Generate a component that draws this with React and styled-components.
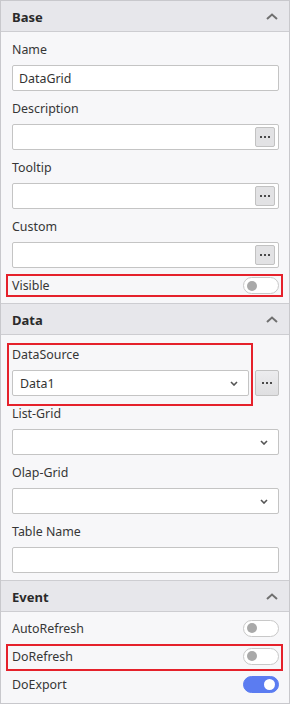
import React from "react";
import styled, { createGlobalStyle } from "styled-components";

const Global = createGlobalStyle`
  html, body { margin: 0; padding: 0; background: #ffffff; }
  * { box-sizing: border-box; }
`;

const Panel = styled.div`
  width: 290px;
  border: 1px solid #c8c8cc;
  background: #f7f7f9;
  font-family: "Noto Sans", "Open Sans", sans-serif;
  font-size: 12.4px;
  color: #333333;
`;

const Section = styled.section`
  & + & { border-top: 1px solid #cdcdd1; }
`;

const Header = styled.div`
  height: 31px;
  border-bottom: 1px solid #cdcdd1;
  background: #e7e7eb;
  display: flex;
  align-items: center;
  justify-content: space-between;
  padding: 1px 11px 0 11px;
  font-size: 13px;
  font-weight: 700;
  color: #2a2a2a;
`;

const Body = styled.div`
  display: flex;
  flex-direction: column;
  gap: ${(p) => p.$gap ?? 9}px;
  padding: ${(p) => p.$pad};
`;

const Field = styled.div`
  display: flex;
  flex-direction: column;
  gap: 7px;
  min-width: 0;
  flex: 1;
`;

const Label = styled.div`
  line-height: 17px;
  height: 17px;
  white-space: nowrap;
  color: #363636;
`;

const Box = styled.div`
  height: 26px;
  border: 1px solid #c4c4c4;
  border-radius: 2px;
  background: #ffffff;
  display: flex;
  align-items: center;
  padding: 0 3px 0 6px;
  color: #333;
`;

const Value = styled.span`
  flex: 1;
  line-height: 17px;
`;

const SelectBox = styled(Box)`
  padding: 0 10px 0 7px;
`;

const InnerBtn = styled.div`
  width: 20px;
  height: 20px;
  border: 1px solid #c2c2c2;
  border-radius: 2px;
  background: #e2e2e4;
  display: flex;
  align-items: center;
  justify-content: center;
`;

const OuterBtn = styled(InnerBtn)`
  width: 24px;
  height: 26px;
  flex: none;
  background: linear-gradient(#ececee, #dfdfe1);
`;

const Inline = styled.div`
  display: flex;
  align-items: flex-end;
  gap: 6px;
`;

const Row = styled.div`
  height: ${(p) => p.$h}px;
  display: flex;
  align-items: center;
  justify-content: space-between;
  color: #363636;
`;

const Highlight = styled.div`
  position: relative;
  display: flex;
  flex-direction: column;
  &::after {
    content: "";
    position: absolute;
    inset: ${(p) => p.$inset};
    border: 2px solid #e5212b;
    pointer-events: none;
  }
`;

const Track = styled.div`
  width: 36px;
  height: 17px;
  border-radius: 9px;
  border: 1px solid ${(p) => (p.$on ? "#5b7cf1" : "#c8c8c8")};
  background: ${(p) => (p.$on ? "#5b7cf1" : "#ffffff")};
  display: flex;
  align-items: center;
  justify-content: ${(p) => (p.$on ? "flex-end" : "flex-start")};
  padding: 0 3px;
  flex: none;
`;

const Knob = styled.div`
  width: ${(p) => (p.$on ? 11 : 10)}px;
  height: ${(p) => (p.$on ? 11 : 10)}px;
  border-radius: 50%;
  background: ${(p) => (p.$on ? "#ffffff" : "#a9a9a9")};
`;

const Dots = () => (
  <svg width="12" height="4" viewBox="0 0 12 4">
    <rect x="1" y="1" width="2" height="2" fill="#4a4a4a" />
    <rect x="5" y="1" width="2" height="2" fill="#4a4a4a" />
    <rect x="9" y="1" width="2" height="2" fill="#4a4a4a" />
  </svg>
);

const ChevronDown = () => (
  <svg width="8" height="5" viewBox="0 0 8 5">
    <polyline points="1,1 4,4 7,1" fill="none" stroke="#555" strokeWidth="1.6" />
  </svg>
);

const ChevronUp = () => (
  <svg width="12" height="7" viewBox="0 0 12 7">
    <polyline points="1,6 6,1.5 11,6" fill="none" stroke="#707070" strokeWidth="2" />
  </svg>
);

const Toggle = ({ on }) => (
  <Track $on={on}>
    <Knob $on={on} />
  </Track>
);

const TextField = ({ label, value, dots }) => (
  <Field>
    <Label>{label}</Label>
    <Box>
      <Value>{value}</Value>
      {dots && (
        <InnerBtn>
          <Dots />
        </InnerBtn>
      )}
    </Box>
  </Field>
);

const SelectField = ({ label, value }) => (
  <Field>
    <Label>{label}</Label>
    <SelectBox>
      <Value>{value}</Value>
      <ChevronDown />
    </SelectBox>
  </Field>
);

export default function App() {
  return (
    <>
      <Global />
      <Panel>
        <Section>
          <Header>
            Base
            <ChevronUp />
          </Header>
          <Body $pad="9px 10px 9px 11px">
            <TextField label="Name" value="DataGrid" />
            <TextField label="Description" dots />
            <TextField label="Tooltip" dots />
            <TextField label="Custom" dots />
            <Highlight $inset="-3px -4px -3px -6px">
              <Row $h={17}>
                Visible
                <Toggle />
              </Row>
            </Highlight>
          </Body>
        </Section>
        <Section>
          <Header>
            Data
            <ChevronUp />
          </Header>
          <Body $pad="11px 10px 7px 11px">
            <Inline>
              <Highlight $inset="-3px -4px -10px -5px" style={{ flex: 1 }}>
                <SelectField label="DataSource" value="Data1" />
              </Highlight>
              <OuterBtn>
                <Dots />
              </OuterBtn>
            </Inline>
            <SelectField label="List-Grid" />
            <SelectField label="Olap-Grid" />
            <TextField label="Table Name" />
          </Body>
        </Section>
        <Section>
          <Header>
            Event
            <ChevronUp />
          </Header>
          <Body $pad="2px 10px 5px 11px" $gap={0}>
            <Row $h={28}>
              AutoRefresh
              <Toggle />
            </Row>
            <Highlight $inset="2px -4px -1px -6px">
              <Row $h={28}>
                DoRefresh
                <Toggle />
              </Row>
            </Highlight>
            <Row $h={28}>
              DoExport
              <Toggle on />
            </Row>
          </Body>
        </Section>
      </Panel>
    </>
  );
}
